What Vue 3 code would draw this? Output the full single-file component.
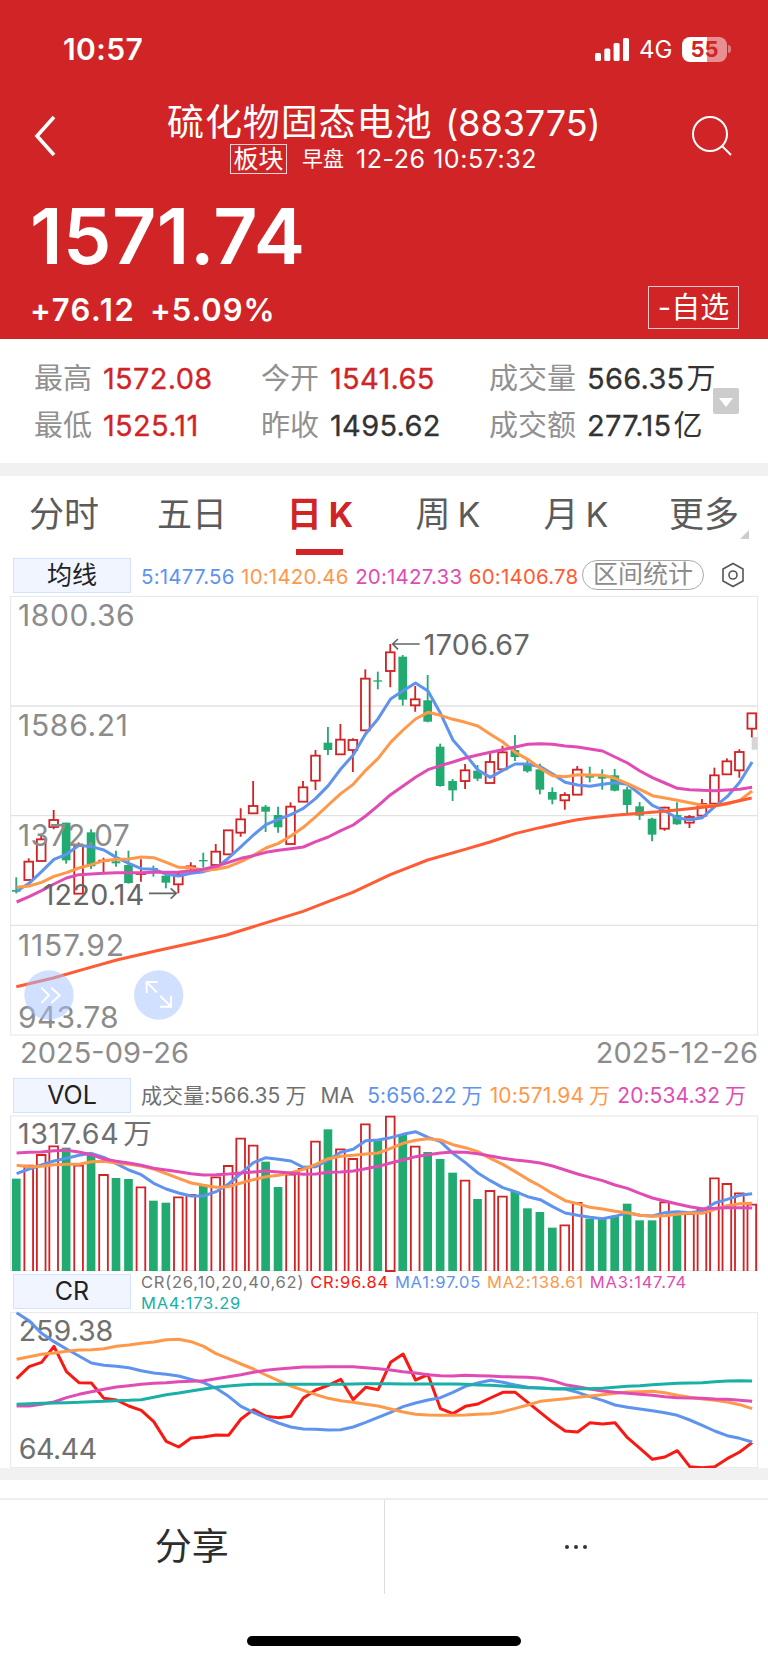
<template>
  <div class="pagina">
    <header class="cabecera">
      <div class="status-bar">
        <span class="hora">10:57</span>
        <div class="status-der">
          <svg class="senal" viewBox="0 0 34 23">
            <rect x="0" y="15" width="6" height="8" rx="1.6" />
            <rect x="9.3" y="10.5" width="6" height="12.5" rx="1.6" />
            <rect x="18.6" y="5" width="6" height="18" rx="1.6" />
            <rect x="28" y="0" width="6" height="23" rx="1.6" />
          </svg>
          <span class="red">4G</span>
          <div class="bateria"><span>55</span></div>
          <i class="polo"></i>
        </div>
      </div>

      <div class="nav">
        <svg class="volver" viewBox="0 0 24 44"><path d="M21 3 4 22 21 41" /></svg>
        <div class="titulos">
          <h1>硫化物固态电池<span class="codigo">(883775)</span></h1>
          <div class="subtitulo">
            <span class="placa">板块</span>
            <span class="sesion">早盘</span>
            <span class="fecha">12-26 10:57:32</span>
          </div>
        </div>
        <svg class="buscar" viewBox="0 0 42 42"><circle cx="19" cy="19" r="17" /><path d="M31 31 40 40" /></svg>
      </div>

      <div class="precio">1571.74</div>
      <div class="cambio">
        <span class="delta">+76.12</span>
        <span class="pct">+5.09%</span>
        <button class="btn-favorito">-自选</button>
      </div>
    </header>

    <section class="datos">
      <div v-for="(d, i) in datos" :key="i" class="dato">
        <span class="etiqueta">{{ d.label }}</span>
        <span class="valor" :class="{ sube: d.sube }">{{ d.valor }}<em v-if="d.unidad">{{ d.unidad }}</em></span>
      </div>
      <div class="desplegar"><svg viewBox="0 0 26 26"><path d="M6 10h14l-7 9z" /></svg></div>
    </section>

    <div class="franja"></div>

    <nav class="tabs">
      <div v-for="t in tabs" :key="t.id" class="tab" :class="{ activo: tabActivo === t.id }" @click="tabActivo = t.id">
        <span>{{ t.texto }}</span><span v-if="t.k" class="k">K</span>
        <svg v-if="t.id === 'mas'" class="esquina" viewBox="0 0 9 9"><path d="M9 0v9H0z" /></svg>
      </div>
    </nav>

    <div class="fila-indicador fila-ma">
      <div class="caja">均线</div>
      <span v-for="m in medias" :key="m.texto" class="ma" :class="m.color">{{ m.texto }}</span>
      <div class="pildora">区间统计</div>
      <svg class="ajustes" viewBox="0 0 24 26">
        <path d="M12 1.5 22 7v12l-10 5.5L2 19V7z" />
        <circle cx="12" cy="13" r="4" />
      </svg>
    </div>

    <!-- velas: 3 unidades por pixel -->
    <svg class="grafico velas" viewBox="0 12 2304 1326">
      <rect class="marco" x="32" y="19" width="2241" height="1316" />
      <path class="rejilla" d="M32 348H2273M32 677H2273M32 1006H2273" />
      <rect class="marca" x="2255" y="441" width="18" height="38" />
      <g v-for="(v, i) in velas" :key="i" :class="v[0]">
        <path class="mecha" :d="mecha(v, i)" />
        <rect class="cuerpo" :x="cx(i) - 13" :y="v[2]" width="26" :height="v[3] - v[2]" />
      </g>
      <polyline class="linea azul" :points="puntos(ma5)" />
      <polyline class="linea naranja" :points="puntos(ma10)" />
      <polyline class="linea rosa" :points="puntos(ma20)" />
      <polyline class="linea coral" :points="ma60" />
      <g class="eje">
        <text x="54" y="108" textLength="350">1800.36</text>
        <text x="54" y="437" textLength="330">1586.21</text>
        <text x="54" y="768" textLength="335">1372.07</text>
        <text x="54" y="1098" textLength="318">1157.92</text>
        <text x="54" y="1313" textLength="302">943.78</text>
      </g>
      <g class="extremo">
        <text x="1271" y="195" textLength="318">1706.67</text>
        <path d="M1259 162H1178M1194 147 1178 162 1194 178" />
        <text x="128" y="944" textLength="305">1220.14</text>
        <path d="M447 910H529M512 895 529 910 512 926" />
      </g>
      <g class="boton-redondo">
        <circle cx="147" cy="1215" r="74" />
        <path d="M124 1193 147 1216 124 1239M154 1193 179 1216 154 1239" />
        <circle cx="476" cy="1215" r="74" />
        <path d="M471 1207 440 1176M440 1209V1176H473M481 1218 513 1250M480 1250H513V1217" />
      </g>
    </svg>

    <div class="fechas">
      <span>2025-09-26</span>
      <span>2025-12-26</span>
    </div>

    <div class="fila-indicador fila-vol">
      <div class="caja">VOL</div>
      <span class="vol vol-total">成交量:566.35<em>万</em></span>
      <span class="vol vol-ma">MA</span>
      <span class="vol azul">5:656.22<em>万</em></span>
      <span class="vol naranja">10:571.94<em>万</em></span>
      <span class="vol rosa">20:534.32<em>万</em></span>
    </div>

    <svg class="grafico volumen" viewBox="0 27 2304 474">
      <rect class="marco" x="32" y="33" width="2241" height="464" />
      <g v-for="(v, i) in volumen" :key="i" :class="velas[i][0]">
        <rect v-if="velas[i][0] === 'g'" class="cuerpo" :x="cx(i) - 13" :y="v" width="26" :height="498 - v" />
        <path v-else class="cuerpo" :d="`M${cx(i) - 13} 498V${v + 2}h26V498${i === 30 ? 'z' : ''}`" />
      </g>
      <g class="eje oscuro">
        <text x="54" y="117" textLength="302">1317.64</text>
        <text x="370" y="117">万</text>
      </g>
      <polyline class="linea azul" :points="puntos(volMa5)" />
      <polyline class="linea naranja" :points="puntos(volMa10)" />
      <polyline class="linea rosa" :points="puntos(volMa20)" />
    </svg>

    <div class="fila-indicador fila-cr">
      <div class="caja">CR</div>
      <div class="cr-textos">
        <span v-for="c in crTextos" :key="c.texto" :class="c.color">{{ c.texto }}</span>
      </div>
    </div>

    <svg class="grafico cr" viewBox="0 123 2304 471">
      <rect class="marco" x="32" y="128" width="2241" height="465" />
      <g class="eje oscuro">
        <text x="56" y="212" textLength="284">259.38</text>
        <text x="56" y="567" textLength="236">64.44</text>
      </g>
      <polyline class="linea rojo" :points="puntos(cr)" />
      <polyline class="linea azul" :points="puntos(crMa1)" />
      <polyline class="linea naranja" :points="puntos(crMa2)" />
      <polyline class="linea rosa" :points="puntos(crMa3)" />
      <polyline class="linea turquesa" :points="puntos(crMa4)" />
    </svg>

    <div class="franja franja-inferior"></div>

    <footer class="acciones">
      <button class="accion">分享</button>
      <button class="accion mas"><i></i><i></i><i></i></button>
    </footer>
    <div class="home-indicator"></div>
  </div>
</template>

<script setup>
import { ref } from 'vue';

const tabs = [
  { id: 'minuto', texto: '分时' },
  { id: 'cinco', texto: '五日' },
  { id: 'dia', texto: '日', k: true },
  { id: 'semana', texto: '周', k: true },
  { id: 'mes', texto: '月', k: true },
  { id: 'mas', texto: '更多' }
];
const tabActivo = ref('dia');

const datos = [
  { label: '最高', valor: '1572.08', sube: true },
  { label: '今开', valor: '1541.65', sube: true },
  { label: '成交量', valor: '566.35', unidad: '万' },
  { label: '最低', valor: '1525.11', sube: true },
  { label: '昨收', valor: '1495.62' },
  { label: '成交额', valor: '277.15', unidad: '亿' }
];

const medias = [
  { texto: '5:1477.56', color: 'azul' },
  { texto: '10:1420.46', color: 'naranja' },
  { texto: '20:1427.33', color: 'rosa' },
  { texto: '60:1406.78', color: 'coral' }
];

const crTextos = [
  { texto: 'CR(26,10,20,40,62)', color: 'gris' },
  { texto: 'CR:96.84', color: 'rojo' },
  { texto: 'MA1:97.05', color: 'azul' },
  { texto: 'MA2:138.61', color: 'naranja' },
  { texto: 'MA3:147.74', color: 'rosa' },
  { texto: 'MA4:173.29', color: 'turquesa' }
];

// [color, máximo, techo del cuerpo, base del cuerpo, mínimo]
const velas = [
  ['g', 862, 900, 905, 910], ['r', 805, 815, 870, 870], ['r', 738, 748, 813, 813], ['r', 660, 690, 711, 718],
  ['g', 698, 698, 811, 821], ['r', 757, 768, 911, 911], ['g', 718, 727, 829, 837], ['r', 803, 812, 813, 849],
  ['g', 782, 814, 820, 830], ['g', 782, 825, 879, 881], ['r', 808, 849, 852, 875], ['g', 827, 834, 840, 860],
  ['g', 855, 857, 878, 895], ['r', 850, 853, 883, 910], ['r', 817, 829, 835, 840], ['g', 788, 810, 814, 833],
  ['r', 762, 785, 825, 830], ['r', 720, 721, 793, 793], ['r', 655, 688, 728, 740], ['r', 573, 648, 670, 670],
  ['g', 645, 650, 665, 726], ['g', 650, 675, 712, 728], ['r', 637, 650, 762, 762], ['r', 573, 592, 635, 635],
  ['r', 480, 497, 572, 600], ['g', 411, 458, 480, 495], ['r', 402, 449, 493, 493], ['r', 445, 450, 480, 546],
  ['r', 238, 266, 421, 421], ['g', 245, 271, 275, 298], ['r', 162, 187, 243, 292], ['g', 195, 200, 329, 347],
  ['r', 288, 328, 346, 365], ['g', 255, 331, 395, 397], ['g', 461, 470, 588, 590], ['g', 567, 573, 601, 633],
  ['r', 522, 541, 573, 597], ['g', 525, 542, 566, 573], ['r', 490, 516, 579, 579], ['r', 467, 487, 538, 540],
  ['g', 435, 480, 501, 513], ['g', 510, 524, 544, 548], ['g', 521, 538, 599, 613], ['g', 592, 606, 629, 643],
  ['r', 607, 615, 631, 659], ['r', 528, 539, 614, 614], ['g', 530, 557, 563, 577], ['g', 538, 559, 566, 599],
  ['g', 537, 556, 602, 604], ['g', 590, 598, 645, 670], ['g', 636, 649, 677, 690], ['g', 683, 686, 734, 754],
  ['r', 650, 653, 716, 722], ['g', 637, 675, 703, 704], ['r', 675, 681, 698, 714], ['r', 627, 642, 677, 680],
  ['r', 533, 556, 641, 641], ['r', 505, 514, 553, 553], ['r', 478, 486, 541, 563], ['r', 370, 370, 416, 442]
];
const ma5 = [904, 880, 845, 808, 793, 766, 770, 780, 802, 820, 836, 838, 852, 858, 850, 845, 835, 804, 770, 735, 704, 688, 674, 655, 625, 587, 537, 495, 431, 386, 327, 302, 279, 303, 370, 450, 493, 540, 562, 541, 522, 522, 530, 552, 577, 585, 589, 583, 578, 583, 612, 646, 663, 684, 689, 683, 650, 620, 577, 516];
const ma10 = [892, 888, 877, 859, 848, 834, 824, 812, 808, 807, 801, 803, 817, 832, 833, 841, 838, 830, 815, 796, 774, 760, 738, 712, 680, 645, 611, 583, 541, 505, 457, 420, 387, 367, 376, 388, 397, 408, 433, 456, 487, 508, 535, 557, 560, 554, 555, 556, 565, 581, 598, 617, 624, 631, 638, 646, 647, 642, 631, 603];
const ma20 = [936, 920, 902, 882, 864, 854, 852, 850, 848, 848, 848, 847, 847, 846, 843, 838, 829, 817, 805, 797, 787, 781, 776, 771, 755, 741, 722, 705, 678, 647, 614, 588, 562, 539, 527, 516, 504, 495, 487, 479, 471, 463, 461, 463, 468, 471, 477, 483, 501, 519, 543, 563, 579, 595, 599, 601, 602, 600, 598, 592];
const ma60 = '49,1190 160,1164 250,1138 350,1110 470,1082 580,1058 680,1035 780,1004 909,964 984,935 1058,907 1171,854 1283,810 1395,778 1470,756 1545,731 1619,713 1694,697 1732,689 1769,684 1844,676 1919,670 1993,664 2068,656 2143,648 2218,632 2255,624';

const volumen = [221, 180, 148, 122, 128, 180, 149, 208, 219, 222, 245, 287, 293, 275, 268, 243, 215, 181, 99, 120, 170, 246, 207, 190, 108, 73, 131, 160, 56, 105, 33, 88, 123, 141, 162, 203, 225, 282, 256, 273, 259, 310, 321, 368, 359, 292, 341, 342, 335, 296, 346, 346, 290, 327, 325, 313, 218, 235, 263, 297];
const volMa5 = [206, 192, 180, 168, 160, 151, 145, 157, 176, 195, 209, 235, 252, 264, 273, 273, 260, 237, 205, 173, 158, 163, 168, 187, 185, 165, 142, 133, 107, 105, 98, 88, 80, 97, 110, 145, 173, 204, 227, 248, 260, 275, 284, 305, 324, 331, 337, 341, 334, 323, 331, 333, 323, 320, 323, 318, 294, 283, 271, 266];
const volMa10 = [181, 185, 184, 179, 178, 178, 170, 169, 174, 178, 183, 192, 206, 220, 234, 241, 247, 245, 234, 224, 215, 211, 203, 193, 178, 161, 154, 151, 147, 144, 130, 115, 106, 101, 105, 119, 128, 140, 160, 178, 200, 223, 243, 266, 287, 296, 307, 312, 319, 323, 331, 334, 332, 328, 324, 325, 313, 302, 296, 295];
const volMa20 = [144, 142, 141, 137, 136, 141, 149, 162, 169, 174, 181, 190, 195, 200, 206, 210, 209, 207, 204, 201, 198, 201, 204, 208, 207, 202, 201, 198, 191, 184, 174, 165, 155, 149, 144, 141, 142, 146, 153, 160, 165, 169, 174, 183, 195, 207, 217, 227, 240, 250, 265, 279, 288, 297, 305, 311, 310, 308, 308, 309];

const cr = [326, 290, 277, 229, 305, 338, 339, 385, 390, 408, 421, 455, 514, 531, 504, 501, 495, 496, 447, 419, 439, 443, 439, 384, 360, 346, 328, 389, 352, 359, 277, 252, 330, 314, 416, 431, 409, 402, 384, 367, 367, 397, 427, 457, 483, 486, 458, 462, 458, 503, 535, 568, 561, 542, 590, 593, 590, 566, 546, 518];
const crMa1 = [128, 152, 190, 215, 237, 258, 279, 286, 289, 293, 302, 309, 313, 318, 328, 338, 355, 379, 409, 427, 444, 459, 471, 477, 478, 480, 479, 471, 457, 442, 427, 410, 399, 390, 383, 367, 349, 339, 331, 337, 345, 352, 354, 356, 357, 367, 380, 391, 405, 412, 417, 422, 428, 436, 450, 466, 483, 497, 505, 516];
const crMa2 = [268, 260, 253, 249, 244, 240, 239, 236, 229, 225, 220, 216, 209, 208, 215, 229, 251, 266, 282, 297, 315, 332, 348, 361, 374, 385, 392, 397, 403, 408, 417, 426, 433, 435, 436, 436, 435, 433, 431, 425, 415, 405, 394, 390, 386, 382, 378, 374, 370, 366, 365, 364, 368, 376, 382, 387, 391, 396, 404, 416];
const crMa3 = [408, 408, 403, 396, 383, 373, 365, 358, 351, 347, 343, 340, 338, 335, 334, 332, 326, 320, 314, 307, 301, 297, 294, 291, 291, 290, 290, 290, 293, 296, 300, 305, 309, 314, 317, 318, 316, 317, 318, 320, 321, 322, 325, 332, 344, 350, 357, 363, 367, 370, 373, 376, 380, 383, 384, 385, 387, 388, 391, 394];
const crMa4 = [403, 401, 400, 399, 398, 397, 395, 394, 392, 391, 389, 382, 374, 369, 363, 357, 352, 348, 345, 343, 343, 343, 343, 343, 343, 343, 343, 342, 341, 341, 341, 342, 342, 342, 342, 342, 343, 345, 346, 348, 350, 353, 354, 356, 356, 356, 356, 355, 352, 349, 347, 344, 342, 340, 339, 338, 335, 333, 332, 333];

const cx = (i) => +(48.8 + i * 37.4).toFixed(1);
const puntos = (serie) => serie.map((y, i) => `${cx(i) + 1},${y}`).join(' ');

// los cuerpos rojos son huecos, la mecha no los atraviesa
const mecha = (v, i) => {
  if (v[0] === 'g') return `M${cx(i)} ${v[1]}V${v[4]}`;
  return `M${cx(i)} ${v[1]}V${v[2]}M${cx(i)} ${v[3]}V${v[4]}`;
};
</script>

<style>
body { margin: 0; background: #fff; }
</style>

<style scoped>
.pagina {
  width: 768px; height: 1663px; background: #fff; overflow: hidden;
  display: flex; flex-direction: column;
  font-family: Inter, "Noto Sans CJK SC", sans-serif; color: #333; white-space: nowrap;
}
.pagina * { box-sizing: border-box; }
.pagina > * { flex: none; }
svg { display: block; }
em { font-style: normal; }
button { font-family: inherit; background: none; border: none; padding: 0; margin: 0; color: inherit; }

.cabecera { height: 339px; background: #d12427; color: #fff; }
.status-bar {
  height: 98px; padding: 0 37px 0 63px;
  display: flex; justify-content: space-between; align-items: center;
}
.hora { font-size: 30px; font-weight: 600; line-height: 36px; letter-spacing: 0.4px; }
.status-der { display: flex; align-items: center; }
.senal { width: 34px; height: 23px; fill: #fff; }
.red { font-size: 24px; margin-left: 10px; line-height: 30px; width: 43px; padding-top: 2px; }
.bateria {
  width: 45px; height: 25px; border-radius: 8px; display: flex; justify-content: center; align-items: center;
  background: linear-gradient(90deg, #fff 55%, #e88f92 55%);
  color: #d12427; font-size: 22px; font-weight: 700;
}
.polo { width: 3px; height: 8px; margin-left: 1px; border-radius: 0 3px 3px 0; background: #e07a7c; }

.nav { display: flex; height: 92px; padding: 0 35px 0 33px; }
.volver { width: 24px; height: 44px; margin-top: 16px; fill: none; stroke: #fff; stroke-width: 3.6; }
.titulos { flex: 1; padding-left: 110px; }
h1 { margin: 5px 0 0; height: 40px; line-height: 40px; font-size: 37px; font-weight: 400; letter-spacing: 0.9px; }
.codigo { margin-left: 13px; font-size: 36px; letter-spacing: -0.1px; }
.subtitulo { display: flex; align-items: center; height: 32px; padding-left: 63px; }
.placa { width: 57px; height: 30px; line-height: 28px; border: 1px solid rgba(255, 255, 255, 0.8); font-size: 25px; text-align: center; }
.sesion { font-size: 21px; line-height: 28px; margin-left: 15px; }
.fecha { font-size: 25px; line-height: 28px; margin-left: 12px; letter-spacing: 0.55px; }
.buscar { width: 42px; height: 42px; margin-top: 17px; fill: none; stroke: #fff; stroke-width: 2; }

.precio { height: 94px; padding-left: 30px; font-size: 77px; font-weight: 600; line-height: 92px; letter-spacing: 0.5px; }
.cambio { display: flex; padding: 2px 29px 0 30px; font-size: 31px; font-weight: 600; line-height: 48px; }
.delta { width: 120px; letter-spacing: 1.6px; }
.pct { letter-spacing: 0.9px; }
.btn-favorito {
  margin-left: auto; width: 91px; height: 43px; border: 1px solid rgba(255, 255, 255, 0.75);
  font-size: 29px; line-height: 41px;
}

.datos {
  position: relative; height: 124px; padding: 18px 0 0 34px;
  display: grid; grid-template-columns: 227px 228px 1fr; grid-template-rows: 46.5px 46.5px;
}
.dato { display: flex; align-items: baseline; font-size: 29px; line-height: 44px; }
.etiqueta { color: #919191; margin-right: 11px; }
.valor { font-size: 29px; font-weight: 400; letter-spacing: 0.3px; -webkit-text-stroke: 0.3px currentColor; }
.valor em { margin-left: 2px; -webkit-text-stroke: 0; }
.valor.sube { color: #d12427; }
.desplegar { position: absolute; right: 29px; top: 49px; width: 26px; height: 26px; border-radius: 2px; background: #ccc; }
.desplegar path { fill: #fff; }
.franja { height: 13px; background: #f1f1f1; }

.tabs { display: flex; height: 80px; }
.tab {
  position: relative; flex: 1; display: flex; justify-content: center; align-items: baseline;
  height: 79px; line-height: 76px; font-size: 35px; color: #5b5b5b;
}
.tab .k { margin-left: 7px; font-size: 34px; }
.tab.activo { color: #d12427; font-weight: 700; }
.tab.activo::after {
  content: ''; position: absolute; left: 50%; bottom: 0; width: 47px; height: 6px; margin-left: -24px; background: #d12427;
}
.esquina { position: absolute; right: 19px; bottom: 16px; width: 9px; height: 9px; fill: #ccc; }

.fila-indicador { display: flex; padding-left: 13px; }
.fila-ma { height: 38px; padding-right: 23px; align-items: center; }
.caja {
  flex: none; width: 118px; height: 35px; line-height: 32px; border: 1px solid #d3e2fd; background: #f0f5ff;
  text-align: center; font-size: 25px; margin-right: 10px; color: #222;
}
.ma { font-size: 20.5px; letter-spacing: 0.2px; margin-right: 6.5px; padding-top: 3px; }
.azul { color: #5e93ee; stroke: #5e93ee; }
.naranja { color: #ff9849; stroke: #ff9849; }
.rosa { color: #e14bb4; stroke: #e14bb4; }
.coral { color: #ff5c33; stroke: #ff5c33; }
.rojo { color: #f91912; stroke: #f91912; }
.turquesa { color: #19b0a8; stroke: #19b0a8; }
.gris { color: #777; }
.ma.coral { margin-right: 0; }
.pildora {
  flex: none; width: 122px; height: 30px; border: 1.5px solid #aaa; border-radius: 15px;
  font-size: 25px; line-height: 26px; text-align: center; color: #8c8c8c; margin-left: auto;
}
.ajustes { flex: none; width: 24px; height: 26px; margin-left: 17px; fill: none; stroke: #555; stroke-width: 1.6; }

.grafico { width: 768px; font-family: Inter, "Noto Sans CJK SC", sans-serif; }
.velas { height: 442px; }
.volumen { height: 158px; }
.cr { height: 157px; }
.marco { fill: none; stroke: #e6e6e6; stroke-width: 3; }
.rejilla { stroke: #e2e2e2; stroke-width: 4; }
.marca { fill: #d6d6d6; }
.mecha { fill: none; stroke-width: 5.5; }
.g .mecha { stroke: #22ab70; }
.g .cuerpo { fill: #22ab70; }
.r .mecha { stroke: #d12427; }
.r .cuerpo { fill: none; stroke: #d12427; stroke-width: 5.5; }
.linea { fill: none; stroke-width: 9; stroke-linejoin: round; }
.eje { fill: #8c8c8c; font-size: 90px; }
.eje.oscuro { fill: #707070; font-size: 86px; }
.extremo { fill: #666; font-size: 86px; }
.extremo path { fill: none; stroke: #666; stroke-width: 5; }
.boton-redondo circle { fill: #a6c2ff; fill-opacity: 0.5; }
.boton-redondo path { fill: none; stroke: #fff; stroke-width: 6; }

.fechas {
  display: flex; justify-content: space-between; height: 40px; padding: 0 10px 0 20px;
  font-size: 29px; line-height: 34px; color: #8c8c8c;
}
.fila-vol { height: 38px; align-items: center; }
.vol { font-size: 21px; line-height: 30px; margin-right: 7px; padding-top: 2px; letter-spacing: 0.1px; color: #707070; }
.vol em { margin-left: 5px; }
.vol.azul { color: #5e93ee; }
.vol.naranja { color: #ff9849; }
.vol.rosa { color: #e14bb4; }
.vol-total { margin-right: 14px; }
.vol-ma { margin-right: 13px; }
.fila-cr { height: 39px; padding-top: 2px; }
.cr-textos { display: flex; flex-wrap: wrap; width: 600px; column-gap: 6px; font-size: 16.5px; line-height: 21px; margin-top: -2px; height: 42px; }
.cr-textos span { letter-spacing: 0.77px; }

.franja-inferior { height: 12px; }
.acciones { display: flex; height: 96px; margin-top: 18px; border-top: 2px solid #ededed; }
.accion { flex: 1; font-size: 37px; color: #2e2e2e; padding-bottom: 6px; }
.accion.mas { display: flex; justify-content: center; align-items: center; gap: 5px; padding-bottom: 1px; border-left: 1px solid #ddd; }
.mas i { width: 4px; height: 4px; background: #333; border-radius: 50%; }
.home-indicator { width: 274px; height: 10px; border-radius: 5px; background: #000; margin: 42px auto 0; }
</style>
